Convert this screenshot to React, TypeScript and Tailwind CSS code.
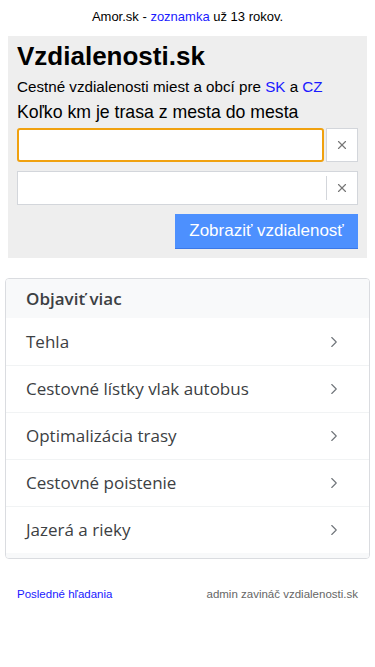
import { ChevronRight, X } from 'lucide-react';

const links = [
    'Tehla',
    'Cestovné lístky vlak autobus',
    'Optimalizácia trasy',
    'Cestovné poistenie',
    'Jazerá a rieky',
];

function ClearInput({ focused }: { focused?: boolean }) {
    if (focused) {
        return (
            <div className="flex h-[34px]">
                <div className="flex-1 rounded-[3px] border-2 border-[#f0a10f] bg-white" />
                <div className="ml-[2px] flex w-[32px] items-center justify-center border border-[#d3d6db] bg-white">
                    <X size={14} strokeWidth={2} className="text-[#777]" />
                </div>
            </div>
        );
    }
    return (
        <div className="flex h-[34px] border border-[#d3d6db] bg-white">
            <div className="flex-1" />
            <div className="my-[4px] w-px bg-[#d3d6db]" />
            <div className="flex w-[30px] items-center justify-center">
                <X size={14} strokeWidth={2} className="text-[#777]" />
            </div>
        </div>
    );
}

export default function App() {
    return (
        <div className="min-h-[667px] bg-white font-['Liberation_Sans',Arial,sans-serif] text-black">
            <p className="pt-[9px] text-center text-[13px] leading-[16px]">
                Amor.sk - <span className="text-[#1a1aff]">zoznamka</span> už 13 rokov.
            </p>

            <div className="mx-[8px] mt-[11px] bg-[#eeeeee] px-[9px] pt-[5px] pb-[9px]">
                <h1 className="text-[26px] font-bold leading-[31px]">Vzdialenosti.sk</h1>
                <p className="mt-[6px] text-[15.2px] leading-[18px]">
                    Cestné vzdialenosti miest a obcí pre <span className="text-[#1a1aff]">SK</span> a{' '}
                    <span className="text-[#1a1aff]">CZ</span>
                </p>
                <p className="mt-[5px] text-[17.7px] leading-[22px]">Koľko km je trasa z mesta do mesta</p>

                <div className="mt-[5px] flex flex-col gap-[9px]">
                    <ClearInput focused />
                    <ClearInput />
                </div>

                <div className="mt-[9px] flex justify-end">
                    <button className="h-[35px] w-[183px] border-b border-[#3b78e7] bg-[#4d90fe] text-[17px] text-white">
                        Zobraziť vzdialenosť
                    </button>
                </div>
            </div>

            <div className="mx-[5px] mt-[20px] overflow-hidden rounded-[4px] border border-[#dadce0] font-['Open_Sans',sans-serif]">
                <div className="flex h-[39px] items-center bg-[#f8f9fa] px-[20px] text-[17px] font-semibold text-[#3c4043]">
                    Objaviť viac
                </div>
                {links.map((label, i) => (
                    <div
                        key={label}
                        className={
                            i === 0
                                ? 'flex h-[47px] items-center justify-between bg-white pl-[20px] pr-[26px]'
                                : 'flex h-[47px] items-center justify-between border-t border-[#f1f3f4] bg-white pl-[20px] pr-[26px]'
                        }
                    >
                        <span className="text-[17px] text-[#3c4043]">{label}</span>
                        <ChevronRight size={18} strokeWidth={1.5} className="text-[#70757a]" />
                    </div>
                ))}
                <div className="h-[5px] bg-[#f8f9fa]" />
            </div>

            <div className="mt-[28px] flex justify-between px-[17px] text-[11.5px] leading-[14px]">
                <span className="text-[#1a1aff]">Posledné hľadania</span>
                <span className="text-[#666]">admin zavináč vzdialenosti.sk</span>
            </div>
        </div>
    );
}
